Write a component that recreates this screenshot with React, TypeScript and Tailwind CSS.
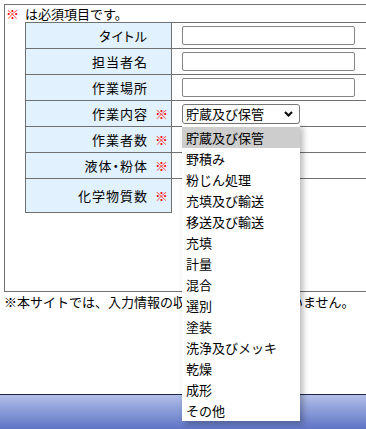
import React from "react";

const rows: { label: string; req: boolean; h: string; kind: "input" | "select" | "none"; last?: boolean }[] = [
  { label: "タイトル", req: false, h: "h-[26px]", kind: "input" },
  { label: "担当者名", req: false, h: "h-[26px]", kind: "input" },
  { label: "作業場所", req: false, h: "h-[26px]", kind: "input" },
  { label: "作業内容", req: true, h: "h-[26px]", kind: "select" },
  { label: "作業者数", req: true, h: "h-[26px]", kind: "none" },
  { label: "液体・粉体", req: true, h: "h-[26px]", kind: "none" },
  { label: "化学物質数", req: true, h: "h-[34px]", kind: "none", last: true },
];

const options = [
  "貯蔵及び保管",
  "野積み",
  "粉じん処理",
  "充填及び輸送",
  "移送及び輸送",
  "充填",
  "計量",
  "混合",
  "選別",
  "塗装",
  "洗浄及びメッキ",
  "乾燥",
  "成形",
  "その他",
];

export default function App() {
  return (
    <div className="relative w-[366px] h-[429px] overflow-hidden bg-white text-black text-[13px] leading-[16px] font-['Noto_Sans_CJK_JP','Noto_Sans_CJK_SC',sans-serif]">
      <div className="pt-[4px] pl-[4px]">
        <div className="w-[440px] h-[288px] border border-[#707070]">
          <div className="h-[17px] flex items-center pl-[1px]">
            <span className="text-[#ff0000]">※</span>
            <span className="ml-[6px]">は必須項目です。</span>
          </div>
          <div className="ml-[20px] w-[410px] border-t border-l border-[#707070]">
            {rows.map((r) => (
              <div key={r.label} className={`flex ${r.h}`}>
                <div className="w-[146px] shrink-0 flex items-center justify-end pr-[3px] bg-[#e1f1fd] border-r border-b border-[#707070] tracking-[1px] [font-feature-settings:'palt']">
                  <span>{r.label}</span>
                  <span className={`ml-[7px] w-[13px] tracking-normal ${r.req ? "text-[#ff0000]" : "text-transparent"}`}>※</span>
                </div>
                <div className={`flex-1 pl-[10px] pt-[3px] border-r border-[#707070] ${r.last ? "" : "border-b"}`}>
                  {r.kind === "input" && (
                    <div className="w-[173px] h-[19px] border border-[#858585] rounded-[2px] bg-white" />
                  )}
                  {r.kind === "select" && (
                    <div className="w-[118px] h-[20px] border border-[#767676] rounded-[3px] bg-white flex items-center justify-between pl-[3px] pr-[6px]">
                      <span className="leading-[16px]">貯蔵及び保管</span>
                      <svg width="9" height="6" viewBox="0 0 9 6">
                        <path d="M1 1 L4.5 4.5 L8 1" fill="none" stroke="#111" strokeWidth="2.2" />
                      </svg>
                    </div>
                  )}
                </div>
              </div>
            ))}
          </div>
        </div>
      </div>
      <div className="pl-[4px] pt-[2px] h-[16px] leading-[16px] whitespace-nowrap">
        ※本サイトでは、入力情報の収集・保存は一切行いません。
      </div>
      <div className="absolute left-0 top-[394px] w-[366px] h-[35px] border-t border-[#1c2650] bg-gradient-to-b from-[#b2bfe8] to-[#5f74c4]" />
      <div className="absolute left-[182px] top-[124px] w-[118px] h-[297px] bg-white pt-[3px] shadow-[3px_3px_6px_rgba(0,0,0,0.28)]">
        {options.map((o, i) => (
          <div
            key={o}
            className={`h-[21px] flex items-center pl-[4px] whitespace-nowrap ${i === 0 ? "bg-[#cdcdcd]" : ""}`}
          >
            {o}
          </div>
        ))}
      </div>
    </div>
  );
}
